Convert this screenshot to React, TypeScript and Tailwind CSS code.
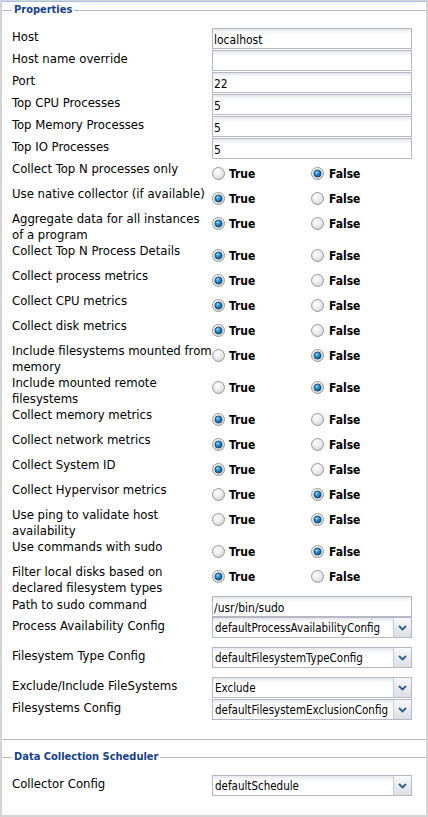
import React from "react";

const fieldBg =
  "bg-[linear-gradient(to_bottom,#e4e6ea_0px,#f6f7f8_3px,#ffffff_6px)]";

function Legend({ text }: { text: string }) {
  return (
    <div className="flex items-center h-[16px]">
      <div className="w-[10px] h-px bg-[#b5b8c8]" />
      <div className="pl-[2px] pr-[2px] leading-4 text-[11px] font-bold text-[#15428b] whitespace-nowrap">
        {text}
      </div>
      <div className="flex-1 h-px bg-[#b5b8c8]" />
    </div>
  );
}

function Label({ lines, pad = false }: { lines: string[]; pad?: boolean }) {
  return (
    <div
      className={`w-[200px] shrink-0 leading-4 text-[13px] whitespace-nowrap ${pad ? "pt-[1px]" : ""}`}
    >
      {lines.map((l, i) => (
        <div key={i}>{l}</div>
      ))}
    </div>
  );
}

function TextRow({ label, value, h = "h-[22px]" }: { label: string; value: string; h?: string }) {
  return (
    <div className={`flex pl-[10px] ${h}`}>
      <Label lines={[label]} pad />
      <div
        className={`w-[200px] h-[21px] border border-[#b5b8c8] ${fieldBg} flex items-center pl-[1px] pt-[2px] text-[12px] whitespace-nowrap overflow-hidden`}
      >
        {value}
      </div>
    </div>
  );
}

function Chevron() {
  return (
    <svg width="9" height="6" viewBox="0 0 9 6">
      <path d="M1 1 L4.5 4.5 L8 1" fill="none" stroke="#2f5b94" strokeWidth="1.8" />
    </svg>
  );
}

function SelectRow({ label, value, h }: { label: string; value: string; h: string }) {
  return (
    <div className={`flex pl-[10px] ${h}`}>
      <Label lines={[label]} pad />
      <div className="w-[200px] h-[21px] border border-[#b5b8c8] flex">
        <div
          className={`flex-1 min-w-0 ${fieldBg} flex items-center pl-[2px] pt-[2px] text-[11.5px] whitespace-nowrap overflow-hidden`}
        >
          {value}
        </div>
        <div className="w-[18px] shrink-0 border-l border-[#c8ccd4] bg-[linear-gradient(to_bottom,#f7f8fa,#e9ecef_50%,#dcdfe4)] flex items-center justify-center">
          <Chevron />
        </div>
      </div>
    </div>
  );
}

function Radio({ checked }: { checked: boolean }) {
  return (
    <svg width="13" height="13" viewBox="0 0 13 13" className="shrink-0">
      <circle cx="6.5" cy="6.5" r="6" fill="url(#rbg)" stroke="#9a9a9a" strokeWidth="1" />
      {checked && (
        <>
          <circle cx="6.5" cy="6.5" r="3.6" fill="url(#rdot)" stroke="#1d3f66" strokeWidth="0.8" />
          <circle cx="5.6" cy="5.5" r="1" fill="#9fd8f7" opacity="0.8" />
        </>
      )}
    </svg>
  );
}

function RadioRow({ lines, value }: { lines: string[]; value: boolean }) {
  return (
    <div className="flex pl-[10px]">
      <Label lines={lines} />
      <div className="flex h-[25px] items-center text-[12px] font-bold">
        <div className="w-[99px] flex items-center gap-[4px]">
          <Radio checked={value} />
          <span>True</span>
        </div>
        <div className="flex items-center gap-[5px]">
          <Radio checked={!value} />
          <span>False</span>
        </div>
      </div>
    </div>
  );
}

const radios: { lines: string[]; value: boolean }[] = [
  { lines: ["Collect Top N processes only"], value: false },
  { lines: ["Use native collector (if available)"], value: true },
  { lines: ["Aggregate data for all instances", "of a program"], value: true },
  { lines: ["Collect Top N Process Details"], value: true },
  { lines: ["Collect process metrics"], value: true },
  { lines: ["Collect CPU metrics"], value: true },
  { lines: ["Collect disk metrics"], value: true },
  { lines: ["Include filesystems mounted from", "memory"], value: false },
  { lines: ["Include mounted remote", "filesystems"], value: false },
  { lines: ["Collect memory metrics"], value: true },
  { lines: ["Collect network metrics"], value: true },
  { lines: ["Collect System ID"], value: true },
  { lines: ["Collect Hypervisor metrics"], value: false },
  { lines: ["Use ping to validate host", "availability"], value: false },
  { lines: ["Use commands with sudo"], value: false },
  { lines: ["Filter local disks based on", "declared filesystem types"], value: true },
];

export default function App() {
  return (
    <div className="w-[428px] h-[817px] bg-[#d4d4d4] pt-[1px] px-[2px] pb-[2px] font-['DejaVu_Sans_Condensed','DejaVu_Sans',sans-serif] font-stretch-condensed text-black">
      <svg className="absolute w-0 h-0">
        <defs>
          <radialGradient id="rbg" cx="40%" cy="35%" r="70%">
            <stop offset="0%" stopColor="#ffffff" />
            <stop offset="60%" stopColor="#e9e9e9" />
            <stop offset="100%" stopColor="#cfcfcf" />
          </radialGradient>
          <radialGradient id="rdot" cx="40%" cy="35%" r="70%">
            <stop offset="0%" stopColor="#5cc0f2" />
            <stop offset="55%" stopColor="#1c80c4" />
            <stop offset="100%" stopColor="#0c4a80" />
          </radialGradient>
        </defs>
      </svg>
      <div className="h-full bg-white border-t border-[#a3c2e8] flex flex-col">
        <div className="border-b border-[#b5b8c8] pb-[19px]">
          <Legend text="Properties" />
          <div className="mt-[10px]">
            <TextRow label="Host" value="localhost" />
            <TextRow label="Host name override" value="" />
            <TextRow label="Port" value="22" />
            <TextRow label="Top CPU Processes" value="5" />
            <TextRow label="Top Memory Processes" value="5" />
            <TextRow label="Top IO Processes" value="5" />
          </div>
          <div className="mt-[1px]">
            {radios.map((r, i) => (
              <RadioRow key={i} lines={r.lines} value={r.value} />
            ))}
          </div>
          <TextRow label="Path to sudo command" value="/usr/bin/sudo" h="h-[21px]" />
          <SelectRow label="Process Availability Config" value="defaultProcessAvailabilityConfig" h="h-[30px]" />
          <SelectRow label="Filesystem Type Config" value="defaultFilesystemTypeConfig" h="h-[30px]" />
          <SelectRow label="Exclude/Include FileSystems" value="Exclude" h="h-[22px]" />
          <SelectRow label="Filesystems Config" value="defaultFilesystemExclusionConfig" h="h-[21px]" />
        </div>
        <div className="mt-[9px]">
          <Legend text="Data Collection Scheduler" />
          <div className="mt-[10px]">
            <SelectRow label="Collector Config" value="defaultSchedule" h="h-[22px]" />
          </div>
        </div>
      </div>
    </div>
  );
}
